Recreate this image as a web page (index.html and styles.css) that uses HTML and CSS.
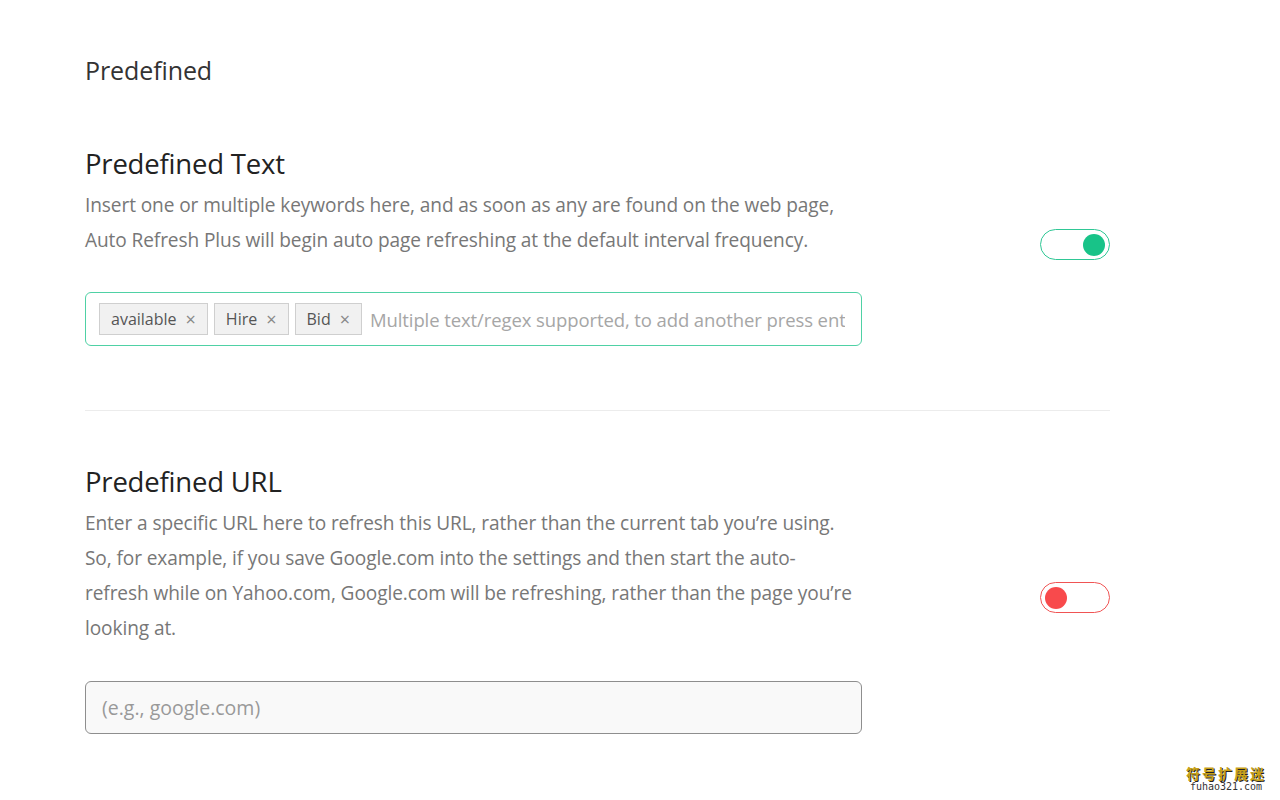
FILE: index.html
```html
<!DOCTYPE html>
<html>
<head>
<meta charset="utf-8">
<link rel="stylesheet" href="styles.css">
</head>
<body>
<main class="page">
  <h1 class="page-title">Predefined</h1>

  <section class="setting">
    <div class="setting-main">
      <h2 class="setting-title">Predefined Text</h2>
      <p class="setting-desc">Insert one or multiple keywords here, and as soon as any are found on the web page, Auto Refresh Plus will begin auto page refreshing at the default interval frequency.</p>
      <div class="tag-input">
        <span class="tag">available <span class="tag-x">×</span></span>
        <span class="tag">Hire <span class="tag-x">×</span></span>
        <span class="tag">Bid <span class="tag-x">×</span></span>
        <span class="tag-placeholder">Multiple text/regex supported, to add another press enter</span>
      </div>
    </div>
    <div class="setting-side">
      <span class="toggle toggle-on"><span class="knob"></span></span>
    </div>
  </section>

  <hr class="divider">

  <section class="setting setting-url">
    <div class="setting-main">
      <h2 class="setting-title">Predefined URL</h2>
      <p class="setting-desc">Enter a specific URL here to refresh this URL, rather than the current tab you’re using. So, for example, if you save Google.com into the settings and then start the auto-refresh while on Yahoo.com, Google.com will be refreshing, rather than the page you’re looking at.</p>
      <div class="url-input">(e.g., google.com)</div>
    </div>
    <div class="setting-side">
      <span class="toggle toggle-off"><span class="knob"></span></span>
    </div>
  </section>
</main>
<div class="watermark">
  <div class="wm-cn">符号扩展迷</div>
  <div class="wm-en">fuhao321.com</div>
</div>
</body>
</html>
```

FILE: styles.css
```css
* { box-sizing: border-box; }
html, body { margin: 0; padding: 0; background: #fff; }
body {
  font-family: "Open Sans", "Noto Sans", sans-serif;
  color: #777;
  width: 1280px;
  height: 800px;
  overflow: hidden;
  position: relative;
}
.page {
  width: 1025px;
  margin-left: 85px;
  padding-top: 52px;
}
.page-title {
  font-size: 25px;
  font-weight: 400;
  color: #333;
  margin: 0;
  line-height: 36px;
  letter-spacing: -0.1px;
}
.setting {
  display: flex;
  align-items: center;
  justify-content: space-between;
}
.setting:first-of-type { margin-top: 55px; }
.setting-main { width: 777px; }
.setting-title {
  font-size: 27.5px;
  font-weight: 400;
  color: #222;
  margin: 0 0 3px;
  line-height: 42px;
  letter-spacing: -0.2px;
}
.setting-desc {
  font-size: 19.1px;
  line-height: 35px;
  margin: 0;
  color: #777;
  letter-spacing: -0.1px;
  width: 770px;
}
.tag-input {
  margin-top: 34px;
  height: 54px;
  border: 1px solid #4fd1a5;
  border-radius: 6px;
  display: flex;
  align-items: center;
  padding: 0 16px 0 13px;
  gap: 6px;
  overflow: hidden;
  white-space: nowrap;
}
.tag {
  display: inline-flex;
  align-items: center;
  height: 32px;
  padding: 0 11px 0 11px;
  background: #f1f1f1;
  border: 1px solid #cfcfcf;
  color: #555;
  font-size: 16px;
  flex: none;
}
.tag-x {
  color: #888;
  font-size: 18px;
  margin-left: 9px;
}
.tag-placeholder {
  color: #a6a6a6;
  font-size: 18.5px;
  margin-left: 2px;
  letter-spacing: -0.1px;
  flex: 1;
  min-width: 0;
  overflow: hidden;
}
.setting-side { width: 70px; display: flex; }
.toggle {
  width: 70px;
  height: 31px;
  border-radius: 16px;
  border: 1px solid;
  display: flex;
  align-items: center;
  padding: 0 4px;
  background: #fff;
}
.knob { width: 22px; height: 22px; border-radius: 50%; display: block; }
.toggle-on { border-color: #2fc795; justify-content: flex-end; }
.toggle-on .knob { background: #18c388; }
.toggle-off { border-color: #f05454; justify-content: flex-start; }
.toggle-off .knob { background: #f84a4c; }
.divider {
  border: 0;
  border-top: 1px solid #ececec;
  margin: 64px 0 50px;
}
.url-input {
  margin-top: 35px;
  height: 53px;
  border: 1px solid #8e8e8e;
  border-radius: 6px;
  background: #f9f9f9;
  color: #999;
  font-size: 19.5px;
  display: flex;
  align-items: center;
  padding-left: 16px;
}
.watermark {
  position: absolute;
  right: 14px;
  bottom: 8px;
  text-align: center;
  line-height: 1;
}
.wm-cn {
  font-family: "Noto Sans CJK SC", sans-serif;
  font-weight: 700;
  font-size: 14px;
  color: #c8a21a;
  letter-spacing: 2px;
  text-shadow: 1px 1px 0 #222;
}
.wm-en {
  font-family: "DejaVu Sans Mono", monospace;
  font-size: 10px;
  color: #333;
  margin-top: 2px;
}
```
